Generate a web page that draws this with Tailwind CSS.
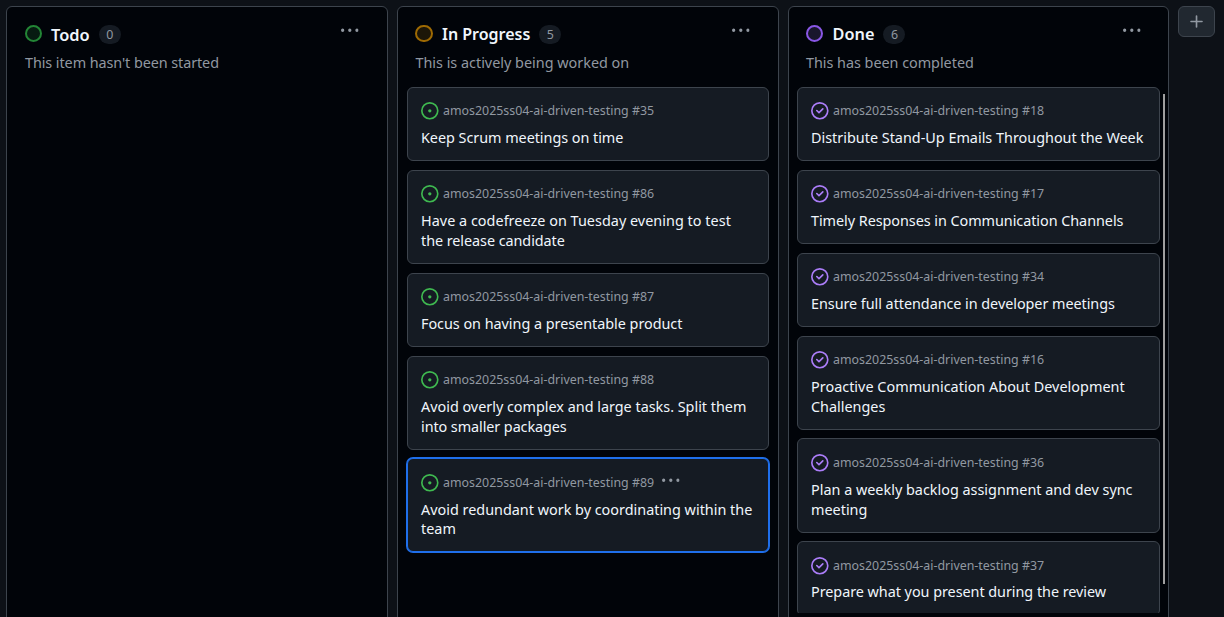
<!DOCTYPE html>
<html lang="en">
<head>
<meta charset="utf-8">
<title>Board</title>
<script src="https://cdn.jsdelivr.net/npm/@tailwindcss/browser@4"></script>
</head>
<body class="h-[617px] overflow-hidden bg-[#0d1117] font-['Noto_Sans',sans-serif] text-[14.4px] leading-[19.8px] text-[#f0f6fc]">
<svg class="hidden">
  <symbol id="open" viewBox="0 0 16 16" overflow="visible"><path d="M8 9.5a1.5 1.5 0 1 0 0-3 1.5 1.5 0 0 0 0 3Z"/><path d="M8 0a8 8 0 1 1 0 16A8 8 0 0 1 8 0ZM1.5 8a6.5 6.5 0 1 0 13 0 6.5 6.5 0 0 0-13 0Z"/></symbol>
  <symbol id="closed" viewBox="0 0 16 16" overflow="visible"><path d="M11.28 6.78a.75.75 0 0 0-1.06-1.06L7.25 8.69 5.78 7.22a.75.75 0 0 0-1.06 1.06l2 2a.75.75 0 0 0 1.06 0l3.5-3.5Z"/><path d="M16 8A8 8 0 1 1 0 8a8 8 0 0 1 16 0Zm-1.5 0a6.5 6.5 0 1 0-13 0 6.5 6.5 0 0 0 13 0Z"/></symbol>
  <symbol id="kebab" viewBox="0 0 16 16"><path d="M8 9a1.5 1.5 0 1 0 0-3 1.5 1.5 0 0 0 0 3ZM1.5 9a1.5 1.5 0 1 0 0-3 1.5 1.5 0 0 0 0 3Zm13 0a1.5 1.5 0 1 0 0-3 1.5 1.5 0 0 0 0 3Z"/></symbol>
</svg>
<main class="flex h-[640px] gap-[9px] pl-1.5 pt-1.5">

  <section class="flex w-[382px] shrink-0 flex-col rounded-md border border-[#3d444d] bg-[#010409]">
    <header class="flex h-20 items-start pl-[18px] pr-[28px] pt-[17px]">
      <div class="grow">
        <div class="flex h-[22px] items-center">
          <span class="mb-[3px] size-[17px] rounded-full border-2 border-[#238636] bg-[#2ea04326]"></span>
          <h2 class="ml-[9px] text-[16.4px] font-semibold">Todo</h2>
          <span class="mb-px ml-[9px] flex h-[19px] w-[22px] items-center justify-center rounded-full bg-[#151b23] text-[12.4px] text-[#9198a1]">0</span>
        </div>
        <p class="mt-[7px] tracking-[-0.08px] text-[#9198a1]">This item hasn't been started</p>
      </div>
      <svg class="mt-[-2px] size-[17.6px] fill-[#9198a1]"><use href="#kebab"/></svg>
    </header>
  </section>

  <section class="flex w-[382px] shrink-0 flex-col rounded-md border border-[#3d444d] bg-[#010409]">
    <header class="flex h-20 items-start pl-[17.4px] pr-[28px] pt-[17px]">
      <div class="grow">
        <div class="flex h-[22px] items-center">
          <span class="mb-[3px] size-[17.6px] rounded-full border-2 border-[#9e6a03] bg-[#bb800926]"></span>
          <h2 class="ml-[9px] text-[16px] font-semibold">In Progress</h2>
          <span class="mb-px ml-[9px] flex h-[19px] w-[22px] items-center justify-center rounded-full bg-[#151b23] text-[12.4px] text-[#9198a1]">5</span>
        </div>
        <p class="mt-[7px] text-[#9198a1]">This is actively being worked on</p>
      </div>
      <svg class="mt-[-2px] size-[17.6px] fill-[#9198a1]"><use href="#kebab"/></svg>
    </header>
    <div class="flex flex-col gap-[8.72px] px-[9px]">
      <article class="h-[74.2px] rounded-md border border-[#3d444d] bg-[#151b23] pl-[13px] pt-[14.4px]">
        <div class="flex h-[17.6px] items-center gap-[4.4px] text-[12.4px] text-[#9198a1]"><svg class="size-[17.6px] overflow-visible fill-[#3fb950]"><use href="#open"/></svg>amos2025ss04-ai-driven-testing #35</div>
        <h3 class="mt-[8.3px] tracking-[-0.04px]">Keep Scrum meetings on time</h3>
      </article>
      <article class="h-[94px] rounded-md border border-[#3d444d] bg-[#151b23] pl-[13px] pt-[14.5px]">
        <div class="flex h-[17.6px] items-center gap-[4.4px] text-[12.4px] text-[#9198a1]"><svg class="size-[17.6px] overflow-visible fill-[#3fb950]"><use href="#open"/></svg>amos2025ss04-ai-driven-testing #86</div>
        <h3 class="mt-[8.2px]"><span class="tracking-[0.03px]">Have a codefreeze on Tuesday evening to test</span><br><span class="tracking-[-0.06px]">the release candidate</span></h3>
      </article>
      <article class="h-[74.2px] rounded-md border border-[#3d444d] bg-[#151b23] pl-[13px] pt-[14.5px]">
        <div class="flex h-[17.6px] items-center gap-[4.4px] text-[12.4px] text-[#9198a1]"><svg class="size-[17.6px] overflow-visible fill-[#3fb950]"><use href="#open"/></svg>amos2025ss04-ai-driven-testing #87</div>
        <h3 class="mt-[8.2px] tracking-[-0.03px]">Focus on having a presentable product</h3>
      </article>
      <article class="h-[94px] rounded-md border border-[#3d444d] bg-[#151b23] pl-[13px] pt-[14.5px]">
        <div class="flex h-[17.6px] items-center gap-[4.4px] text-[12.4px] text-[#9198a1]"><svg class="size-[17.6px] overflow-visible fill-[#3fb950]"><use href="#open"/></svg>amos2025ss04-ai-driven-testing #88</div>
        <h3 class="mt-[8.2px]"><span class="tracking-[-0.01px]">Avoid overly complex and large tasks. Split them</span><br><span class="tracking-[-0.08px]">into smaller packages</span></h3>
      </article>
      <article class="h-[94px] rounded-md border border-[#1f6feb] bg-[#151b23] pl-[13px] pt-[14.5px] ring-1 ring-[#1f6feb]">
        <div class="flex h-[17.6px] items-center gap-[4.4px] text-[12.4px] text-[#9198a1]"><svg class="size-[17.6px] overflow-visible fill-[#3fb950]"><use href="#open"/></svg>amos2025ss04-ai-driven-testing #89<svg class="mb-[3px] ml-[4px] size-[17.6px] fill-[#9198a1]"><use href="#kebab"/></svg></div>
        <h3 class="mt-[8.2px]">Avoid redundant work by coordinating within the<br>team</h3>
      </article>
    </div>
  </section>

  <section class="relative flex w-[381px] shrink-0 flex-col rounded-md border border-[#3d444d] bg-[#010409]">
    <header class="flex h-20 items-start pl-[17px] pr-[27px] pt-[17px]">
      <div class="grow">
        <div class="flex h-[22px] items-center">
          <span class="mb-[3px] size-[17px] rounded-full border-2 border-[#8957e5] bg-[#ab7df826]"></span>
          <h2 class="ml-[9.6px] text-[16.3px] font-semibold">Done</h2>
          <span class="mb-px ml-[9px] flex h-[19px] w-[22px] items-center justify-center rounded-full bg-[#151b23] text-[12.4px] text-[#9198a1]">6</span>
        </div>
        <p class="mt-[7px] tracking-[-0.03px] text-[#9198a1]">This has been completed</p>
      </div>
      <svg class="mt-[-2px] size-[17.6px] fill-[#9198a1]"><use href="#kebab"/></svg>
    </header>
    <div class="flex h-[526px] flex-col gap-[8.72px] overflow-hidden px-2">
      <article class="h-[74.2px] shrink-0 rounded-md border border-[#3d444d] bg-[#151b23] pl-[13px] pt-[14.4px]">
        <div class="flex h-[17.6px] items-center gap-[4.4px] text-[12.4px] text-[#9198a1]"><svg class="size-[17.6px] overflow-visible fill-[#ab7df8]"><use href="#closed"/></svg>amos2025ss04-ai-driven-testing #18</div>
        <h3 class="mt-[8.3px]">Distribute Stand-Up Emails Throughout the Week</h3>
      </article>
      <article class="h-[74.2px] shrink-0 rounded-md border border-[#3d444d] bg-[#151b23] pl-[13px] pt-[14.5px]">
        <div class="flex h-[17.6px] items-center gap-[4.4px] text-[12.4px] text-[#9198a1]"><svg class="size-[17.6px] overflow-visible fill-[#ab7df8]"><use href="#closed"/></svg>amos2025ss04-ai-driven-testing #17</div>
        <h3 class="mt-[8.2px] tracking-[-0.05px]">Timely Responses in Communication Channels</h3>
      </article>
      <article class="h-[74.2px] shrink-0 rounded-md border border-[#3d444d] bg-[#151b23] pl-[13px] pt-[14.5px]">
        <div class="flex h-[17.6px] items-center gap-[4.4px] text-[12.4px] text-[#9198a1]"><svg class="size-[17.6px] overflow-visible fill-[#ab7df8]"><use href="#closed"/></svg>amos2025ss04-ai-driven-testing #34</div>
        <h3 class="mt-[8.2px] tracking-[-0.05px]">Ensure full attendance in developer meetings</h3>
      </article>
      <article class="h-[94px] shrink-0 rounded-md border border-[#3d444d] bg-[#151b23] pl-[13px] pt-[14.5px]">
        <div class="flex h-[17.6px] items-center gap-[4.4px] text-[12.4px] text-[#9198a1]"><svg class="size-[17.6px] overflow-visible fill-[#ab7df8]"><use href="#closed"/></svg>amos2025ss04-ai-driven-testing #16</div>
        <h3 class="mt-[8.2px]"><span class="tracking-[0.02px]">Proactive Communication About Development</span><br>Challenges</h3>
      </article>
      <article class="h-[94.3px] shrink-0 rounded-md border border-[#3d444d] bg-[#151b23] pl-[13px] pt-[14.5px]">
        <div class="flex h-[17.6px] items-center gap-[4.4px] text-[12.4px] text-[#9198a1]"><svg class="size-[17.6px] overflow-visible fill-[#ab7df8]"><use href="#closed"/></svg>amos2025ss04-ai-driven-testing #36</div>
        <h3 class="mt-[8.2px]">Plan a weekly backlog assignment and dev sync<br>meeting</h3>
      </article>
      <article class="h-[74.2px] shrink-0 rounded-md border border-[#3d444d] bg-[#151b23] pl-[13px] pt-[14.5px]">
        <div class="flex h-[17.6px] items-center gap-[4.4px] text-[12.4px] text-[#9198a1]"><svg class="size-[17.6px] overflow-visible fill-[#ab7df8]"><use href="#closed"/></svg>amos2025ss04-ai-driven-testing #37</div>
        <h3 class="mt-[7.5px] tracking-[-0.04px]">Prepare what you present during the review</h3>
      </article>
    </div>
    <div class="absolute right-[3px] top-[87px] h-[490px] w-[2px] bg-[#9f9f9f]"></div>
  </section>

  <button class="flex h-[31px] w-[37px] shrink-0 items-center justify-center rounded-md border border-[#3d444d] bg-[#212830]"><svg viewBox="0 0 16 16" class="size-[17.6px] fill-[#9198a1]"><path d="M7.75 2a.75.75 0 0 1 .75.75V7h4.25a.75.75 0 0 1 0 1.5H8.5v4.25a.75.75 0 0 1-1.5 0V8.5H2.75a.75.75 0 0 1 0-1.5H7V2.75A.75.75 0 0 1 7.75 2Z"/></svg></button>
</main>
</body>
</html>
